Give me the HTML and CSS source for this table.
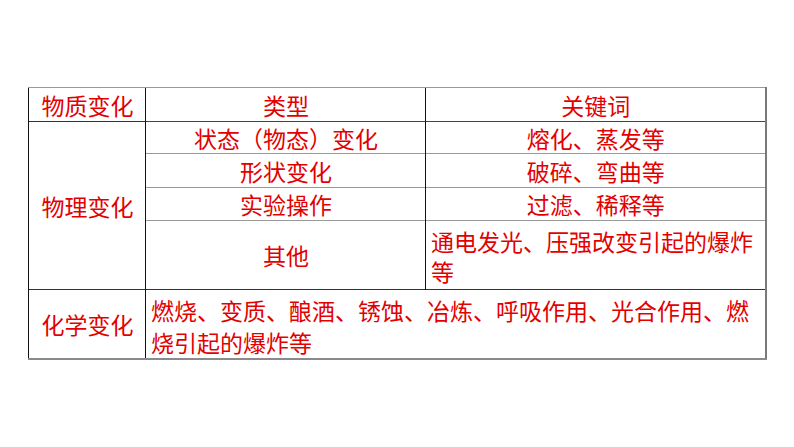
FILE: index.html
```html
<!DOCTYPE html>
<html lang="zh-CN">
<head>
<meta charset="utf-8">
<link rel="stylesheet" href="styles.css">
</head>
<body>
<table class="grid">
  <colgroup>
    <col class="c1">
    <col class="c2">
    <col class="c3">
  </colgroup>
  <tr class="r-head">
    <td class="center">物质变化</td>
    <td class="center">类型</td>
    <td class="center">关键词</td>
  </tr>
  <tr class="r-a">
    <td class="center group" rowspan="4">物理变化</td>
    <td class="center">状态（物态）变化</td>
    <td class="center">熔化、蒸发等</td>
  </tr>
  <tr class="r-b">
    <td class="center">形状变化</td>
    <td class="center">破碎、弯曲等</td>
  </tr>
  <tr class="r-c">
    <td class="center">实验操作</td>
    <td class="center">过滤、稀释等</td>
  </tr>
  <tr class="r-d">
    <td class="center">其他</td>
    <td class="left wrap">通电发光、压强改变引起的爆炸等</td>
  </tr>
  <tr class="r-e">
    <td class="center">化学变化</td>
    <td class="left long" colspan="2">燃烧、变质、酿酒、锈蚀、冶炼、呼吸作用、光合作用、燃烧引起的爆炸等</td>
  </tr>
</table>
</body>
</html>
```

FILE: styles.css
```css
html, body {
  margin: 0;
  padding: 0;
  background: #ffffff;
}

body {
  padding: 87px 0 0 28px;
  font-family: "Noto Sans CJK SC", "Noto Sans", sans-serif;
  color: #e30000;
}

.grid {
  border-collapse: collapse;
  table-layout: fixed;
  width: 737px;
  border-top: 1px solid #444;
  border-left: 1px solid #555;
  border-right: 2px solid #7a7a7a;
  border-bottom: 2px solid #8a8a8a;
}

.c1 { width: 117px; }
.c2 { width: 280px; }
.c3 { width: 340px; }

.grid td {
  padding: 0 4px 0 5px;
  font-size: 23px;
  line-height: 30px;
  border-left: 1px solid #111;
  border-top: 1px solid #9a9a9a;
  vertical-align: middle;
}

.grid td.group { border-top: 1px solid #333; }

.r-head td { height: 33px; }
.r-a td { height: 31px; border-top-color: #444; }
.r-b td { height: 33px; }
.r-c td { height: 32px; }
.r-d td { height: 68px; }
.r-e td { height: 67px; border-top: 1px solid #333; }

.center { text-align: center; }
.left { text-align: left; }

.grid td.wrap {
  vertical-align: top;
  height: 63px;
  padding-top: 5px;
  line-height: 30px;
}

.grid td.long {
  line-height: 32px;
  vertical-align: top;
  height: 63px;
  padding: 4px 8px 0 5px;
}
```
